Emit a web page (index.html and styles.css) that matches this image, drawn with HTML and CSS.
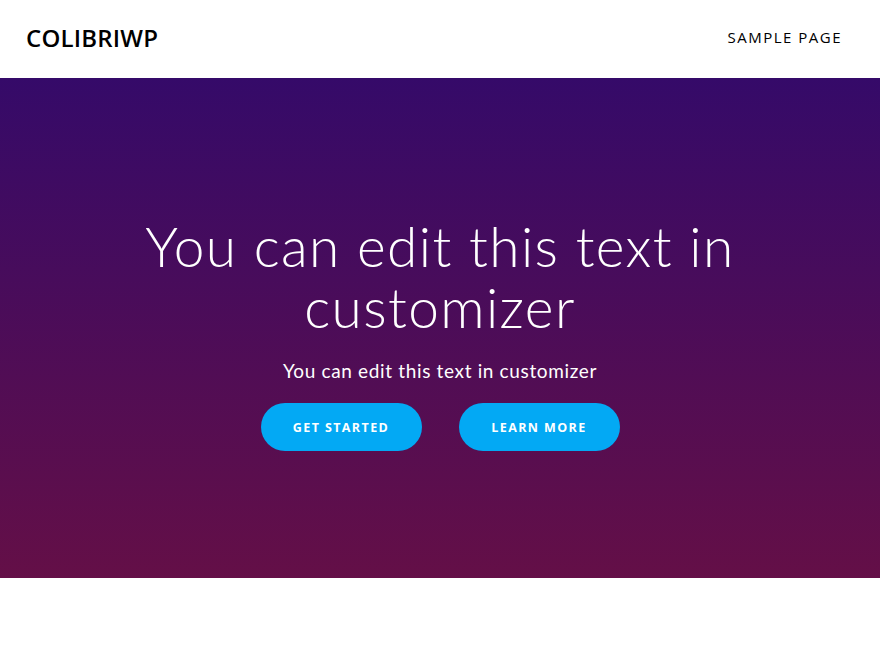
FILE: index.html
```html
<!DOCTYPE html>
<html>
<head>
<meta charset="utf-8">
<link rel="stylesheet" href="styles.css">
</head>
<body>
<header class="topbar">
  <div class="logo">COLIBRIWP</div>
  <nav class="menu"><a href="#">SAMPLE PAGE</a></nav>
</header>
<section class="hero">
  <h1 class="hero-title">You can edit this text in customizer</h1>
  <p class="hero-sub">You can edit this text in customizer</p>
  <div class="hero-buttons">
    <a class="btn" href="#">GET STARTED</a>
    <a class="btn" href="#">LEARN MORE</a>
  </div>
</section>
</body>
</html>
```
FILE: styles.css
```css
* { box-sizing: border-box; }
html, body { margin: 0; padding: 0; background: #fff; }
body { width: 880px; height: 660px; overflow: hidden; }
.topbar {
  height: 78px;
  display: flex;
  align-items: center;
  justify-content: space-between;
  padding: 0 38px 4px 26px;
}
.logo {
  font-family: "Open Sans", sans-serif;
  font-weight: 600;
  font-size: 24px;
  color: #000;
  letter-spacing: 0.2px;
}
.menu a {
  font-family: "Open Sans", sans-serif;
  font-weight: 500;
  font-size: 15px;
  letter-spacing: 1.5px;
  color: #000;
  text-decoration: none;
}
.hero {
  height: 500px;
  background: linear-gradient(180deg, #350a69 0%, #640f47 100%);
  display: flex;
  flex-direction: column;
  align-items: center;
  padding-top: 138px;
  color: #fff;
}
.hero-title {
  margin: 0;
  width: 700px;
  text-align: center;
  font-family: "Lato", sans-serif;
  font-weight: 300;
  font-size: 55px;
  line-height: 61px;
  letter-spacing: 1.4px;
}
.hero-sub {
  margin: 20px 0 0;
  font-family: "Lato", sans-serif;
  font-size: 19px;
  line-height: 26px;
  letter-spacing: 0.65px;
}
.hero-buttons {
  margin-top: 19px;
  display: flex;
  gap: 37px;
}
.btn {
  display: flex;
  align-items: center;
  justify-content: center;
  width: 161px;
  height: 48px;
  border-radius: 24px;
  background: #03a9f4;
  color: #fff;
  text-decoration: none;
  font-family: "Open Sans", sans-serif;
  font-weight: 700;
  font-size: 12.5px;
  letter-spacing: 1.4px;
}
```
